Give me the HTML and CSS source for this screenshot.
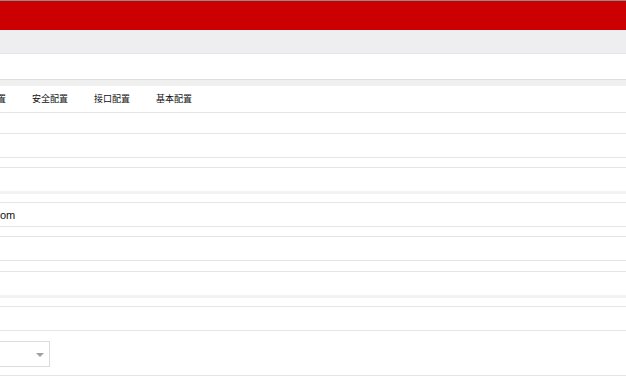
FILE: index.html
```html
<!DOCTYPE html>
<html lang="zh">
<head>
<meta charset="utf-8">
<title>配置</title>
<link rel="stylesheet" href="styles.css">
</head>
<body>
<div class="page">
  <div class="topline"></div>
  <header class="header"></header>
  <div class="subbar"></div>
  <div class="blank"></div>
  <section class="panel">
    <nav class="tabs">
      <span class="tab tab-cut">配置</span>
      <span class="tab">安全配置</span>
      <span class="tab">接口配置</span>
      <span class="tab">基本配置</span>
    </nav>
    <div class="form">
      <div class="row row-short line-b"></div>
      <div class="row line-b"></div>
      <div class="group">
        <div class="row"></div>
        <div class="band"></div>
        <div class="row line-t line-b"><span class="val">om</span></div>
      </div>
      <div class="group">
        <div class="row"></div>
      </div>
      <div class="group">
        <div class="row"></div>
        <div class="band"></div>
        <div class="row line-t line-b"></div>
      </div>
      <div class="row row-select line-b">
        <div class="select"><span class="caret"></span></div>
      </div>
    </div>
  </section>
</div>
</body>
</html>
```

FILE: styles.css
```css
html, body {
  margin: 0;
  padding: 0;
  background: #ffffff;
}
body {
  font-family: "Liberation Sans", "Noto Sans CJK SC", sans-serif;
  color: #222222;
  overflow: hidden;
}
.page {
  width: 626px;
  height: 386px;
  overflow: hidden;
  display: flex;
  flex-direction: column;
}
.topline {
  height: 1px;
  background: #8c8c8c;
  flex: none;
}
.header {
  height: 29px;
  background: #cc0000;
  flex: none;
}
.subbar {
  height: 23px;
  background: #eeeef0;
  border-bottom: 1px solid #e4e4e6;
  flex: none;
}
.blank {
  height: 25px;
  flex: none;
}
.panel {
  border-top: 1px solid #dedede;
  padding-top: 6px;
  background: #f0f0f0;
  flex: none;
}
.tabs {
  height: 26px;
  background: #ffffff;
  border-bottom: 1px solid #e4e4e4;
  display: flex;
  align-items: center;
  gap: 26px;
  font-size: 9px;
  line-height: 1;
  color: #111111;
  padding-top: 1px;
  box-sizing: border-box;
  height: 27px;
}
.tab {
  white-space: nowrap;
}
.tab-cut {
  margin-left: -12px;
}
.form {
  background: #ffffff;
  display: flex;
  flex-direction: column;
  gap: 9px;
}
.form > .row:first-child {
  margin-bottom: -9px;
}
.row {
  height: 23px;
  box-sizing: content-box;
  display: flex;
  align-items: center;
}
.row-short {
  height: 20px;
}
.line-b {
  border-bottom: 1px solid #e4e4e4;
}
.line-t {
  border-top: 1px solid #e4e4e4;
}
.group {
  border-top: 1px solid #e4e4e4;
  display: flex;
  flex-direction: column;
}
.group > .row:last-child:first-child {
  border-bottom: 1px solid #e4e4e4;
}
.band {
  height: 3px;
  background: #f3f3f3;
  margin-bottom: 8px;
}
.val {
  font-size: 11px;
  color: #111111;
}
.form > .group:nth-child(5) {
  margin-top: 1px;
}
.row-select {
  height: 44px;
  margin-top: -9px;
  align-items: flex-start;
}
.select {
  margin-top: 10px;
  margin-left: -10px;
  width: 58px;
  height: 24px;
  border: 1px solid #dcdcdc;
  box-sizing: content-box;
  position: relative;
  display: flex;
  align-items: center;
  justify-content: flex-end;
  padding-right: 0;
}
.caret {
  width: 0;
  height: 0;
  border-left: 4px solid transparent;
  border-right: 4px solid transparent;
  border-top: 4px solid #a0a0a0;
  margin-right: 5px;
  margin-top: 1px;
}
```
